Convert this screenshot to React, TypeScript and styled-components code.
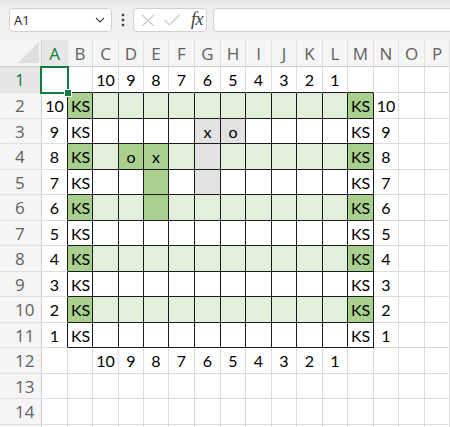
import React from "react";
import styled, { createGlobalStyle, css } from "styled-components";

const COL_WIDTHS = [42, 26, 25, 26, 25, 25, 26, 26, 25, 26, 25, 26, 25, 26, 25, 26, 25];
const ROW_HEIGHTS = [27, 26, 26, 25, 26, 25, 26, 25, 26, 25, 26, 25, 26, 25, 26, 26];
const LETTERS = "ABCDEFGHIJKLMNOP".split("");
const VISIBLE_ROW_LABELS = 14;

const GREEN_LIGHT = "#e2efda";
const GREEN_DARK = "#a9d08e";
const GRAY_FILL = "#e2e2e2";
const GRID = "#dcdcdc";
const INK = "#1a1a1a";
const ACCENT = "#107c41";

type Fill = "none" | "light" | "dark" | "gray";

const GlobalStyle = createGlobalStyle`
  html, body { margin: 0; padding: 0; background: #ffffff; overflow: hidden; }
  body { width: 450px; height: 427px; }
`;

const Page = styled.div`
  width: 450px;
  height: 427px;
  overflow: hidden;
  display: flex;
  flex-direction: column;
`;

const Toolbar = styled.div`
  height: 40px;
  flex: 0 0 40px;
  box-sizing: border-box;
  padding: 8px 0 0 9px;
  display: flex;
  align-items: flex-start;
  background: linear-gradient(#e4e4e4 0px, #ececec 6px, #f0f0f0 8px);
  overflow: hidden;
`;

const NameBox = styled.div`
  width: 103px;
  height: 24px;
  box-sizing: border-box;
  border: 1px solid #d1d1d1;
  border-radius: 4px;
  background: #ffffff;
  display: flex;
  align-items: center;
  justify-content: space-between;
  padding: 0 6px 0 4px;
  font-family: "Open Sans", sans-serif;
  font-size: 13px;
  color: #242424;
`;

const Kebab = styled.div`
  width: 21px;
  height: 24px;
  display: flex;
  align-items: center;
  justify-content: center;
`;

const FxGroup = styled.div`
  width: 74px;
  height: 24px;
  box-sizing: border-box;
  border: 1px solid #d1d1d1;
  border-radius: 4px;
  background: #ffffff;
  display: flex;
  align-items: center;
  padding-left: 6px;
`;

const IconSlot = styled.span<{ $ml: number }>`
  display: flex;
  margin-left: ${(p) => p.$ml}px;
`;

const FxLabel = styled.span`
  margin-left: 11px;
  font-family: "Liberation Serif", serif;
  font-style: italic;
  font-size: 18px;
  line-height: 1;
  color: #3b3b3b;
  letter-spacing: -0.5px;
  position: relative;
  top: -1px;
`;

const FormulaInput = styled.div`
  flex: 1;
  height: 24px;
  margin-left: 6px;
  margin-right: -10px;
  box-sizing: border-box;
  border: 1px solid #d1d1d1;
  border-radius: 4px;
  background: #ffffff;
`;

const Sheet = styled.div`
  display: grid;
  grid-template-columns: ${COL_WIDTHS.map((w) => w + "px").join(" ")};
  grid-template-rows: ${ROW_HEIGHTS.map((h) => h + "px").join(" ")};
`;

const HeaderBase = css`
  box-sizing: border-box;
  background: #f5f5f5;
  font-family: "Open Sans", sans-serif;
  font-size: 17px;
  color: #616161;
  display: flex;
  align-items: center;
  overflow: hidden;
`;

const Corner = styled.div`
  ${HeaderBase};
  border-right: 1px solid #cfcfcf;
  border-bottom: 1px solid #cfcfcf;
  position: relative;
`;

const ColHeader = styled.div<{ $selected?: boolean }>`
  ${HeaderBase};
  justify-content: center;
  border-right: 1px solid #e0e0e0;
  border-bottom: 1px solid #cfcfcf;
  ${(p) =>
    p.$selected &&
    css`
      background: #e6e6e6;
      color: ${ACCENT};
    `}
`;

const RowHeader = styled.div<{ $selected?: boolean }>`
  ${HeaderBase};
  justify-content: flex-start;
  padding-left: 15px;
  border-right: 1px solid #cfcfcf;
  border-bottom: 1px solid #e0e0e0;
  ${(p) =>
    p.$selected &&
    css`
      background: #e6e6e6;
      color: ${ACCENT};
    `}
`;

const fillColor: Record<Fill, string> = {
  none: "#ffffff",
  light: GREEN_LIGHT,
  dark: GREEN_DARK,
  gray: GRAY_FILL,
};

const Cell = styled.div<{
  $fill: Fill;
  $align: "left" | "center";
  $darkRight: boolean;
  $darkBottom: boolean;
}>`
  position: relative;
  box-sizing: border-box;
  background: ${(p) => fillColor[p.$fill]};
  border-right: 1px solid ${(p) => (p.$darkRight ? INK : GRID)};
  border-bottom: 1px solid ${(p) => (p.$darkBottom ? INK : GRID)};
  display: flex;
  align-items: center;
  justify-content: ${(p) => (p.$align === "left" ? "flex-start" : "center")};
  padding-left: ${(p) => (p.$align === "left" ? "3px" : "0")};
  font-family: Lato, "Open Sans", sans-serif;
  font-size: 16px;
  color: #000000;
  white-space: nowrap;
  overflow: visible;
`;

const Selection = styled.div`
  position: absolute;
  left: -2px;
  top: -1px;
  width: 29px;
  height: 28px;
  box-sizing: border-box;
  border: 2px solid ${ACCENT};
  pointer-events: none;
  z-index: 2;
`;

const FillHandle = styled.div`
  position: absolute;
  right: -4px;
  bottom: -4px;
  width: 6px;
  height: 6px;
  background: ${ACCENT};
  outline: 1px solid #ffffff;
`;

const CornerTriangle = () => (
  <svg width="42" height="27" viewBox="0 0 42 27" style={{ position: "absolute", left: 0, top: 0 }}>
    <polygon points="18,23 39,23 39,2" fill="#dedede" />
  </svg>
);

const Chevron = () => (
  <svg width="10" height="6" viewBox="0 0 10 6">
    <polyline points="1,1 5,5 9,1" fill="none" stroke="#424242" strokeWidth="1.1" />
  </svg>
);

const Dots = () => (
  <svg width="4" height="14" viewBox="0 0 4 14">
    <rect x="0.8" y="0.8" width="2.4" height="2.4" fill="#424242" />
    <rect x="0.8" y="5.8" width="2.4" height="2.4" fill="#424242" />
    <rect x="0.8" y="10.8" width="2.4" height="2.4" fill="#424242" />
  </svg>
);

const CancelIcon = () => (
  <svg width="14" height="13" viewBox="0 0 14 13">
    <path d="M1 0.8 L13 12.2 M13 0.8 L1 12.2" stroke="#c4c4c4" strokeWidth="1.1" fill="none" />
  </svg>
);

const CheckIcon = () => (
  <svg width="16" height="12" viewBox="0 0 16 12">
    <polyline points="0.8,6 5.5,10.8 15.3,1" stroke="#c4c4c4" strokeWidth="1.1" fill="none" />
  </svg>
);

type CellSpec = { text: string; align: "left" | "center"; fill: Fill };

const special: Record<string, Partial<CellSpec>> = {
  "3,7": { text: "x", fill: "gray" },
  "3,8": { text: "o", fill: "gray" },
  "4,7": { fill: "gray" },
  "5,7": { fill: "gray" },
  "4,4": { text: "o", fill: "dark" },
  "4,5": { text: "x", fill: "dark" },
  "5,5": { fill: "dark" },
  "6,5": { fill: "dark" },
};

function cellSpec(r: number, c: number): CellSpec {
  let text = "";
  let align: "left" | "center" = "center";
  let fill: Fill = "none";
  if ((r === 1 || r === 12) && c >= 3 && c <= 12) text = String(13 - c);
  if (r >= 2 && r <= 11) {
    if (c === 1 || c === 14) text = String(12 - r);
    if (c === 2 || c === 13) {
      text = "KS";
      align = "left";
    }
    if (r % 2 === 0) {
      if (c === 2 || c === 13) fill = "dark";
      else if (c >= 3 && c <= 12) fill = "light";
    }
  }
  const s = special[`${r},${c}`];
  if (s) {
    if (s.text !== undefined) text = s.text;
    if (s.fill !== undefined) fill = s.fill;
  }
  return { text, align, fill };
}

export default function App() {
  const rows = ROW_HEIGHTS.length;
  const cols = COL_WIDTHS.length;
  const items: React.ReactNode[] = [];
  for (let r = 0; r < rows; r++) {
    for (let c = 0; c < cols; c++) {
      const key = `${r}-${c}`;
      if (r === 0 && c === 0) {
        items.push(
          <Corner key={key}>
            <CornerTriangle />
          </Corner>
        );
      } else if (r === 0) {
        items.push(
          <ColHeader key={key} $selected={c === 1}>
            {LETTERS[c - 1]}
          </ColHeader>
        );
      } else if (c === 0) {
        items.push(
          <RowHeader key={key} $selected={r === 1}>
            {r <= VISIBLE_ROW_LABELS ? r : ""}
          </RowHeader>
        );
      } else {
        const spec = cellSpec(r, c);
        const darkRight = r >= 2 && r <= 11 && c >= 1 && c <= 13;
        const darkBottom = c >= 2 && c <= 13 && r >= 1 && r <= 11;
        items.push(
          <Cell
            key={key}
            $fill={spec.fill}
            $align={spec.align}
            $darkRight={darkRight}
            $darkBottom={darkBottom}
          >
            {spec.text}
            {r === 1 && c === 1 && (
              <Selection>
                <FillHandle />
              </Selection>
            )}
          </Cell>
        );
      }
    }
  }

  return (
    <>
      <GlobalStyle />
      <Page>
        <Toolbar>
          <NameBox>
            <span>A1</span>
            <Chevron />
          </NameBox>
          <Kebab>
            <Dots />
          </Kebab>
          <FxGroup>
            <IconSlot $ml={1}>
              <CancelIcon />
            </IconSlot>
            <IconSlot $ml={9}>
              <CheckIcon />
            </IconSlot>
            <FxLabel>fx</FxLabel>
          </FxGroup>
          <FormulaInput />
        </Toolbar>
        <Sheet>{items}</Sheet>
      </Page>
    </>
  );
}
